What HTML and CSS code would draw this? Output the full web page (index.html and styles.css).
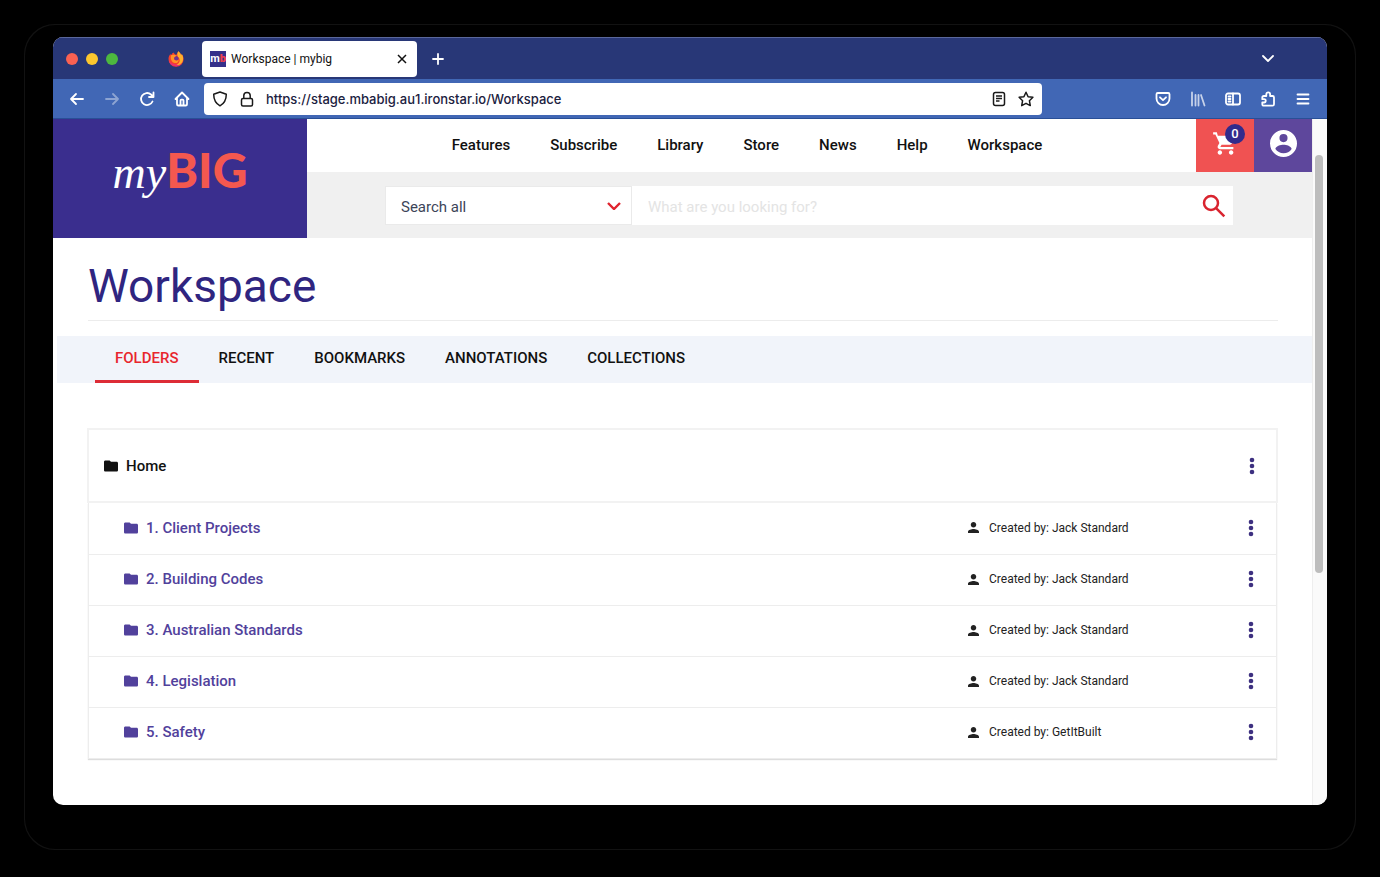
FILE: index.html
```html
<!DOCTYPE html>
<html lang="en">
<head>
  <meta charset="UTF-8" />
  <meta name="viewport" content="width=device-width, initial-scale=1.0">
  <title>Workspace | mybig</title>
  <link rel="stylesheet" href="styles.css">
</head>
<body>
<svg class="sprite" aria-hidden="true">
  <symbol id="folder" viewBox="2 4 20 16"><path d="M10 4H4c-1.100 0-2 .9-2 2v12c0 1.100.9 2 2 2h16c1.100 0 2-.9 2-2V8c0-1.100-.9-2-2-2h-8z"/></symbol>
  <symbol id="person" viewBox="4 4 16 16"><path d="M12 12c2.200 0 4-1.800 4-4s-1.800-4-4-4-4 1.800-4 4 1.800 4 4 4zm0 2c-2.700 0-8 1.300-8 4v2h16v-2c0-2.700-5.300-4-8-4z"/></symbol>
  <symbol id="dots" viewBox="0 0 6 18"><circle cx="3" cy="3" r="2.300"/><circle cx="3" cy="9" r="2.300"/><circle cx="3" cy="15" r="2.300"/></symbol>
</svg>

<div class="window">
  <div class="tab-bar">
    <div class="lights">
      <span class="light red"></span>
      <span class="light yellow"></span>
      <span class="light green"></span>
    </div>
    <svg class="firefox" viewBox="0 0 16 16">
      <path fill="#f5402f" d="M5.500 1.600 7 3.400l1.500.4L10.300.3c1.300 1 2.300 2.200 2.700 3.600l.9-.7c1.200 1.600 1.800 3.200 1.700 5.200A7.500 7.500 0 0 1 .5 8c0-2.200.8-3.800 1.900-5.100l.6 1.300c.7-1.100 1.500-2 2.500-2.600z"/>
      <path fill="#e62d7c" d="M.8 9.500c1 5.400 8.500 7.600 12.700 3.600C10 14.400 3.600 14 .8 9.500z"/>
      <path fill="#ffb12b" d="M10.300.3c1.300 1 2.300 2.200 2.700 3.600l.9-.7c1.400 2.300 1.800 5.300.3 8-1.400 2.200-3.600 3-5.900 2.800 2.800-1.300 4.200-3.800 2.900-6.800L9.600 5.300C9.100 3.600 9.300 1.800 10.300.3z"/>
      <path fill="#ff9226" d="M3 4.200c1.600-.8 3-.7 4.300-.1L8.800 5 7 6.100l-.9 1.800c.9 2 3.400 2 4.600.5.200 2.500-1.800 3.900-3.800 3.600C4 11.600 2.200 8.300 3 4.200z"/>
      <path fill="#70368f" d="M6.200 6.400 8.300 5c1.300.4 2.300 1.300 2.400 2.900C9.700 9.600 7 9.600 6.200 8z"/>
    </svg>
    <div class="browser-tab">
      <span class="favicon">m<b>b</b></span>
      <span class="tab-title">Workspace | mybig</span>
      <button type="button" class="tab-close" aria-label="Close tab">
        <svg viewBox="0 0 10 10"><path d="m1 1 8 8M9 1 1 9"/></svg>
      </button>
    </div>
    <button type="button" class="chrome-btn new-tab" aria-label="New tab">
      <svg viewBox="0 0 16 16"><path d="M8 3v10M3 8h10"/></svg>
    </button>
    <button type="button" class="chrome-btn list-tabs" aria-label="List all tabs">
      <svg viewBox="0 0 16 16"><path d="m3 5 5 5 5-5"/></svg>
    </button>
  </div>

  <div class="toolbar">
    <div class="nav-buttons">
      <button type="button" class="chrome-btn" aria-label="Back">
        <svg viewBox="0 0 16 16"><path d="M14 8H2M7 3 2 8l5 5"/></svg>
      </button>
      <button type="button" class="chrome-btn" aria-label="Forward" disabled>
        <svg viewBox="0 0 16 16"><path d="M2 8h12M9 3l5 5-5 5"/></svg>
      </button>
      <button type="button" class="chrome-btn" aria-label="Reload">
        <svg viewBox="0 0 16 16"><path d="M13.500 10.500A6 6 0 1 1 12 3.500l2 2M14.500 1.500v4.500H10"/></svg>
      </button>
      <button type="button" class="chrome-btn" aria-label="Home">
        <svg viewBox="0 0 16 16"><path d="M1.500 8 8 1.500 14.500 8M3 7v6.200c0 .8.500 1.300 1.300 1.300h7.400c.8 0 1.300-.5 1.300-1.300V7M6.500 14V9.500c0-.6.300-.9.900-.9h1.200c.6 0 .9.300.9.900V14"/></svg>
      </button>
    </div>
    <div class="url-bar">
      <svg class="url-icon" viewBox="0 0 16 16"><path d="M8 1 14.300 3.200c0 5.300-1.600 9-6.300 11.600C3.300 12.200 1.700 8.500 1.700 3.200z"/></svg>
      <svg class="url-icon" viewBox="0 0 16 16"><rect x="2.500" y="7.500" width="11" height="7.500" rx="1.500"/><path d="M4.800 7.500V4.600a3.200 3.200 0 0 1 6.400 0v2.900"/></svg>
      <input class="url-input" type="text" aria-label="Address" value="https://stage.mbabig.au1.ironstar.io/Workspace">
      <button type="button" class="url-btn" aria-label="Reader view">
        <svg viewBox="0 0 16 16"><rect x="2.500" y="1.500" width="11" height="13" rx="2"/><path d="M5 5h6M5 7.500h6M5 10h3.500"/></svg>
      </button>
      <button type="button" class="url-btn" aria-label="Bookmark this page">
        <svg viewBox="0 0 16 16"><path d="m8 1.300 2.100 4.400 4.800.6-3.500 3.400.9 4.900L8 12.300l-4.300 2.300.9-4.900L1.100 6.300l4.800-.6z"/></svg>
      </button>
    </div>
    <div class="tool-buttons">
      <button type="button" class="chrome-btn" aria-label="Save to Pocket">
        <svg viewBox="0 0 16 16"><path d="M2.800 2h10.400c.8 0 1.300.5 1.300 1.300V7.500a6.500 6.500 0 0 1-13 0V3.300C1.500 2.500 2 2 2.800 2zM5 6.300l3 2.900 3-2.900"/></svg>
      </button>
      <button type="button" class="chrome-btn library" aria-label="Library">
        <svg viewBox="0 0 16 16"><path d="M2 1.500v13M5.500 4v10.500M8.500 4v10.500M11 4l3.500 10.500"/></svg>
      </button>
      <button type="button" class="chrome-btn" aria-label="Sidebars">
        <svg viewBox="0 0 16 16"><rect x="1" y="2.500" width="14" height="11" rx="2"/><path d="M8 2.500v11M3.500 5.500h2M3.500 8h2M3.500 10.500h2"/></svg>
      </button>
      <button type="button" class="chrome-btn" aria-label="Extensions">
        <svg viewBox="0 0 16 16"><path d="M2.300 6.500c0-1 .5-1.500 1.500-1.500h2.500V3.200a1.900 1.900 0 0 1 3.800 0V5h2.400c1 0 1.500.5 1.500 1.500v6.700c0 1-.5 1.500-1.500 1.500H3.800c-1 0-1.500-.5-1.500-1.500v-1.700h1.800a1.600 1.600 0 0 0 0-3.300H2.300z"/></svg>
      </button>
      <button type="button" class="chrome-btn" aria-label="Menu">
        <svg viewBox="0 0 16 16"><path d="M2.500 3.500h11M2.500 8h11M2.500 12.500h11"/></svg>
      </button>
    </div>
  </div>

  <div class="viewport">
    <div class="page">
      <header class="header">
        <a href="#" class="logo"><span class="logo-my">my</span><span class="logo-big">BIG</span></a>
        <div class="header-main">
          <div class="header-top">
            <nav class="main-nav">
              <a href="#">Features</a>
              <a href="#">Subscribe</a>
              <a href="#">Library</a>
              <a href="#">Store</a>
              <a href="#">News</a>
              <a href="#">Help</a>
              <a href="#">Workspace</a>
            </nav>
            <a href="#" class="tile cart" aria-label="Cart">
              <svg viewBox="0 0 24 24"><path d="M7 18c-1.100 0-2 .9-2 2s.9 2 2 2 2-.9 2-2-.9-2-2-2zM1 2v2h2l3.600 7.600-1.400 2.400c-.7 1.300.3 3 1.800 3h12v-2H7.400l1.100-2h7.500c.7 0 1.400-.4 1.700-1L21.700 5H5.200l-.9-3zm16 16c-1.100 0-2 .9-2 2s.9 2 2 2 2-.9 2-2-.9-2-2-2z"/></svg>
              <span class="badge">0</span>
            </a>
            <a href="#" class="tile account" aria-label="Account">
              <svg viewBox="2 2 20 20"><path d="M12 2a10 10 0 1 0 0 20 10 10 0 0 0 0-20zm0 3a3 3 0 1 1 0 6 3 3 0 0 1 0-6zm0 14.200c-2.500 0-4.700-1.300-6-3.200 0-2 4-3.100 6-3.100s6 1.100 6 3.100a7.200 7.200 0 0 1-6 3.200z"/></svg>
            </a>
          </div>
          <form class="search">
            <select class="search-scope" aria-label="Search in">
              <option>Search all</option>
            </select>
            <div class="search-field">
              <input type="text" aria-label="Search" placeholder="What are you looking for?">
              <button type="submit" aria-label="Search">
                <svg viewBox="0 0 24 24"><circle cx="9" cy="9" r="7"/><path d="m14.300 14.300 8 8"/></svg>
              </button>
            </div>
          </form>
        </div>
      </header>

      <main>
        <h1>Workspace</h1>
        <nav class="tabs">
          <a href="#" class="active">FOLDERS</a>
          <a href="#">RECENT</a>
          <a href="#">BOOKMARKS</a>
          <a href="#">ANNOTATIONS</a>
          <a href="#">COLLECTIONS</a>
        </nav>

        <section class="folders">
          <div class="folder-home">
            <svg class="folder-icon"><use href="#folder"/></svg>
            <span>Home</span>
            <button type="button" class="more" aria-label="Home options"><svg><use href="#dots"/></svg></button>
          </div>
          <ul class="folder-list">
            <li>
              <svg class="folder-icon"><use href="#folder"/></svg>
              <a href="#">1. Client Projects</a>
              <span class="owner"><svg><use href="#person"/></svg>Created by: Jack Standard</span>
              <button type="button" class="more" aria-label="Folder options"><svg><use href="#dots"/></svg></button>
            </li>
            <li>
              <svg class="folder-icon"><use href="#folder"/></svg>
              <a href="#">2. Building Codes</a>
              <span class="owner"><svg><use href="#person"/></svg>Created by: Jack Standard</span>
              <button type="button" class="more" aria-label="Folder options"><svg><use href="#dots"/></svg></button>
            </li>
            <li>
              <svg class="folder-icon"><use href="#folder"/></svg>
              <a href="#">3. Australian Standards</a>
              <span class="owner"><svg><use href="#person"/></svg>Created by: Jack Standard</span>
              <button type="button" class="more" aria-label="Folder options"><svg><use href="#dots"/></svg></button>
            </li>
            <li>
              <svg class="folder-icon"><use href="#folder"/></svg>
              <a href="#">4. Legislation</a>
              <span class="owner"><svg><use href="#person"/></svg>Created by: Jack Standard</span>
              <button type="button" class="more" aria-label="Folder options"><svg><use href="#dots"/></svg></button>
            </li>
            <li>
              <svg class="folder-icon"><use href="#folder"/></svg>
              <a href="#">5. Safety</a>
              <span class="owner"><svg><use href="#person"/></svg>Created by: GetItBuilt</span>
              <button type="button" class="more" aria-label="Folder options"><svg><use href="#dots"/></svg></button>
            </li>
          </ul>
        </section>
      </main>
    </div>
    <div class="scrollbar"><div class="thumb"></div></div>
  </div>
</div>
</body>
</html>
```
FILE: styles.css
```css
* {
  box-sizing: border-box;
}

body {
  margin: 0;
  padding: 37px 53px 72px;
  min-height: 100vh;
  display: flex;
  background: #000;
  color: #111;
  font-family: Roboto, "Liberation Sans", sans-serif;
  font-size: 15px;
}

a {
  color: inherit;
  text-decoration: none;
}

button {
  display: flex;
  align-items: center;
  justify-content: center;
  padding: 0;
  border: none;
  background: none;
  cursor: pointer;
}

.sprite {
  display: none;
}

.window {
  flex: 1;
  min-width: 0;
  display: flex;
  flex-direction: column;
  border-radius: 10px;
  overflow: hidden;
  background: #fff;
  box-shadow: 0 16px 0 28px #000, 0 16px 0 29px #121212;
}

/* browser chrome */

.tab-bar {
  display: flex;
  align-items: center;
  height: 42px;
  padding: 0 51px 0 13px;
  background: #283777;
  border-top: 1px solid #5a679c;
}

.lights {
  display: flex;
  gap: 8px;
}

.light {
  width: 12px;
  height: 12px;
  border-radius: 50%;
}

.red { background: #fa6152; }
.yellow { background: #fdc72e; }
.green { background: #4db83f; }

.firefox {
  width: 16px;
  height: 16px;
  margin: 0 18px 0 50px;
}

.browser-tab {
  display: flex;
  align-items: center;
  gap: 5px;
  width: 215px;
  height: 36px;
  padding: 0 10px 0 8px;
  background: #fff;
  border-radius: 4px;
}

.favicon {
  width: 16px;
  height: 16px;
  background: #35308a;
  color: #fff;
  font-size: 11px;
  font-weight: 700;
  line-height: 16px;
  text-align: center;
  overflow: hidden;
}

.favicon b {
  color: #f0404f;
}

.tab-title {
  flex: 1;
  font-size: 12px;
}

.tab-close svg {
  width: 10px;
  height: 10px;
  stroke: #111;
  stroke-width: 1.5;
}

.chrome-btn svg {
  width: 16px;
  height: 16px;
  fill: none;
  stroke: #fff;
  stroke-width: 1.8;
  stroke-linecap: round;
  stroke-linejoin: round;
}

.chrome-btn:disabled {
  opacity: 0.4;
}

.new-tab {
  margin-left: 13px;
}

.list-tabs {
  margin-left: auto;
}

.toolbar {
  display: flex;
  align-items: center;
  height: 40px;
  padding: 1px 16px 0;
  background: #4167b5;
  border-bottom: 1px solid #294f96;
}

.nav-buttons {
  display: flex;
  gap: 19px;
}

.url-bar {
  display: flex;
  align-items: center;
  gap: 11px;
  flex: 1;
  height: 32px;
  margin: 0 113px 0 14px;
  padding: 0 8px;
  background: #fff;
  border-radius: 4px;
}

.url-icon,
.url-btn svg {
  flex: none;
  width: 16px;
  height: 16px;
  fill: none;
  stroke: #1a1a1a;
  stroke-width: 1.5;
  stroke-linejoin: round;
}

.url-input {
  flex: 1;
  min-width: 0;
  padding: 0;
  border: none;
  outline: none;
  color: #1b2140;
  font-family: Inter, sans-serif;
  font-size: 13px;
  font-weight: 500;
}

.tool-buttons {
  display: flex;
  gap: 19px;
}

.library {
  opacity: 0.7;
}

/* page */

.viewport {
  flex: 1;
  display: flex;
}

.page {
  flex: 1;
  min-width: 0;
}

.scrollbar {
  width: 15px;
  padding: 36px 2px 0;
  background: #fafafa;
  border-left: 1px solid #eee;
}

.thumb {
  width: 8px;
  height: 418px;
  border-radius: 4px;
  background: #bdbdbd;
}

.header {
  display: flex;
}

.logo {
  flex: none;
  display: flex;
  align-items: baseline;
  justify-content: center;
  width: 254px;
  height: 119px;
  padding-top: 22px;
  background: #3a2e8e;
}

.logo-my {
  color: #fff;
  font-family: "Liberation Serif", serif;
  font-size: 46px;
  font-style: italic;
}

.logo-big {
  color: #f4584f;
  font-family: Lato, sans-serif;
  font-size: 48px;
  font-weight: 900;
}

.header-main {
  flex: 1;
  display: flex;
  flex-direction: column;
}

.header-top {
  display: flex;
  height: 53px;
}

.main-nav {
  flex: 1;
  display: flex;
  align-items: center;
  justify-content: center;
  gap: 40px;
  padding: 0 9px 2px 0;
  font-weight: 500;
}

.tile {
  position: relative;
  display: flex;
  align-items: center;
  justify-content: center;
  width: 58px;
  padding-bottom: 4px;
}

.tile svg {
  width: 27px;
  height: 27px;
  fill: #fff;
}

.cart {
  background: #f05252;
}

.account {
  background: #5e479c;
}

.badge {
  position: absolute;
  top: 5px;
  right: 9px;
  width: 20px;
  height: 20px;
  border-radius: 50%;
  background: #322b8c;
  color: #fff;
  font-size: 13px;
  font-weight: 500;
  line-height: 20px;
  text-align: center;
}

.search {
  flex: 1;
  display: flex;
  padding: 14px 79px 13px 78px;
  background: #f0f0f0;
}

.search-scope {
  appearance: none;
  width: 247px;
  padding: 2px 15px 0;
  border: 1px solid #eaeaea;
  border-radius: 0;
  background: #fff url("data:image/svg+xml,%3Csvg xmlns='http://www.w3.org/2000/svg' viewBox='0 0 14 8' fill='none' stroke='%23e0232e' stroke-width='2.400'%3E%3Cpath d='m1 1 6 6 6-6'/%3E%3C/svg%3E") no-repeat right 10px center / 14px 8px;
  color: #3c4558;
  font-family: inherit;
  font-size: 15px;
}

.search-field {
  flex: 1;
  display: flex;
  padding: 0 7px 0 16px;
  background: #fff;
}

.search-field input {
  flex: 1;
  min-width: 0;
  padding: 2px 0 0;
  border: none;
  outline: none;
  background: none;
  font-family: inherit;
  font-size: 15px;
}

.search-field input::placeholder {
  color: #e4e4e4;
}

.search-field svg {
  width: 24px;
  height: 24px;
  fill: none;
  stroke: #d9242f;
  stroke-width: 2.5;
}

h1 {
  margin: 0 34px 15px 35px;
  padding: 20px 0 6px;
  border-bottom: 1px solid #ececec;
  color: #2f2580;
  font-size: 46px;
  font-weight: 400;
  line-height: 56px;
}

.tabs {
  display: flex;
  margin-left: 4px;
  padding-left: 38px;
  background: #f1f4fa;
  font-weight: 500;
}

.tabs a {
  padding: 1px 20px 0;
  border-bottom: 3px solid transparent;
  line-height: 43px;
}

.tabs .active {
  color: #e8262d;
  border-color: #dd2c36;
}

.folders {
  margin: 45px 34px;
  font-weight: 500;
}

.folder-home,
.folder-list li {
  display: flex;
  align-items: center;
}

.folder-home {
  height: 75px;
  padding: 0 21px 0 15px;
  border: 2px solid #f2f2f2;
}

.folder-icon {
  flex: none;
  width: 14px;
  height: 12px;
  margin-right: 8px;
}

.folder-list {
  margin: 0 1px;
  padding: 0;
  list-style: none;
  border: 1px solid #ededed;
  border-top: none;
  box-shadow: 0 1px 1px #ddd;
}

.folder-list li {
  height: 51px;
  padding: 0 22px 2px 35px;
  color: #51419c;
}

.folder-list li + li {
  border-top: 1px solid #ededed;
}

.folder-list a {
  flex: 1;
}

.folder-icon,
.owner svg {
  fill: currentColor;
}

.owner {
  display: flex;
  align-items: center;
  width: 280px;
  color: #222;
  font-size: 12px;
  font-weight: 400;
}

.owner svg {
  width: 11px;
  height: 11px;
  margin-right: 10px;
}

.more {
  margin-left: auto;
}

.more svg {
  width: 6px;
  height: 18px;
  fill: #3d3080;
}
```
